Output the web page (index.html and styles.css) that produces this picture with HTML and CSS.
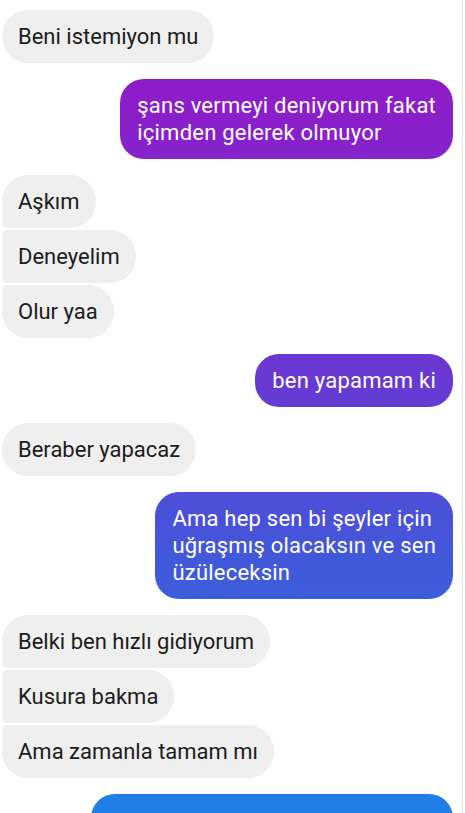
FILE: index.html
```html
<!DOCTYPE html>
<html lang="tr">
<head>
  <meta charset="UTF-8">
  <title>Sohbet</title>
  <link rel="stylesheet" href="styles.css">
</head>
<body>
  <div class="sohbet">

    <div class="grup gelen">
      <div class="balon">Beni istemiyon mu</div>
    </div>

    <div class="grup giden">
      <div class="balon">şans vermeyi deniyorum fakat<br>içimden gelerek olmuyor</div>
    </div>

    <div class="grup gelen">
      <div class="balon">Aşkım</div>
      <div class="balon">Deneyelim</div>
      <div class="balon">Olur yaa</div>
    </div>

    <div class="grup giden">
      <div class="balon">ben yapamam ki</div>
    </div>

    <div class="grup gelen">
      <div class="balon">Beraber yapacaz</div>
    </div>

    <div class="grup giden">
      <div class="balon">Ama hep sen bi şeyler için<br>uğraşmış olacaksın ve sen<br>üzüleceksin</div>
    </div>

    <div class="grup gelen">
      <div class="balon">Belki ben hızlı gidiyorum</div>
      <div class="balon">Kusura bakma</div>
      <div class="balon">Ama zamanla tamam mı</div>
    </div>

    <div class="grup giden">
      <div class="balon bos"></div>
    </div>

  </div>
</body>
</html>
```

FILE: styles.css
```css
html, body {
  margin: 0;
  height: 100%;
  overflow: hidden;
}

body {
  font-family: Roboto, "Noto Sans", Arial, sans-serif;
  background: #fff;
}

.sohbet {
  width: 463px;
  height: 100%;
  border-right: 1px solid #e4e4e4;
  box-sizing: border-box;
  padding: 10px 9px 0 2px;
  display: flex;
  flex-direction: column;
  gap: 16px;
}

.grup {
  display: flex;
  flex-direction: column;
  gap: 2px;
}

.balon {
  font-size: 22px;
  line-height: 27px;
  padding: 13px 16px;
  border-radius: 26px;
  white-space: nowrap;
}

/* gelen mesajlar */
.gelen {
  align-items: flex-start;
}

.gelen .balon {
  background: #efefef;
  color: #1c1c1c;
}

.gelen .balon + .balon {
  border-top-left-radius: 5px;
}

.gelen .balon:not(:last-child) {
  border-bottom-left-radius: 5px;
}

/* giden mesajlar, renk ekrana gore degisir */
.giden {
  align-items: flex-end;
}

.giden .balon {
  color: #fff;
  letter-spacing: 0.22px;
  padding: 13px 17px;
  border-radius: 24px;
  background: linear-gradient(to bottom,
    #9516c6 0px,
    #8a1fca 120px,
    #6839d3 380px,
    #4456da 545px,
    #1f80e6 813px);
  background-attachment: fixed;
}

.bos {
  width: 362px;
  height: 60px;
  padding: 0 !important;
}
```
